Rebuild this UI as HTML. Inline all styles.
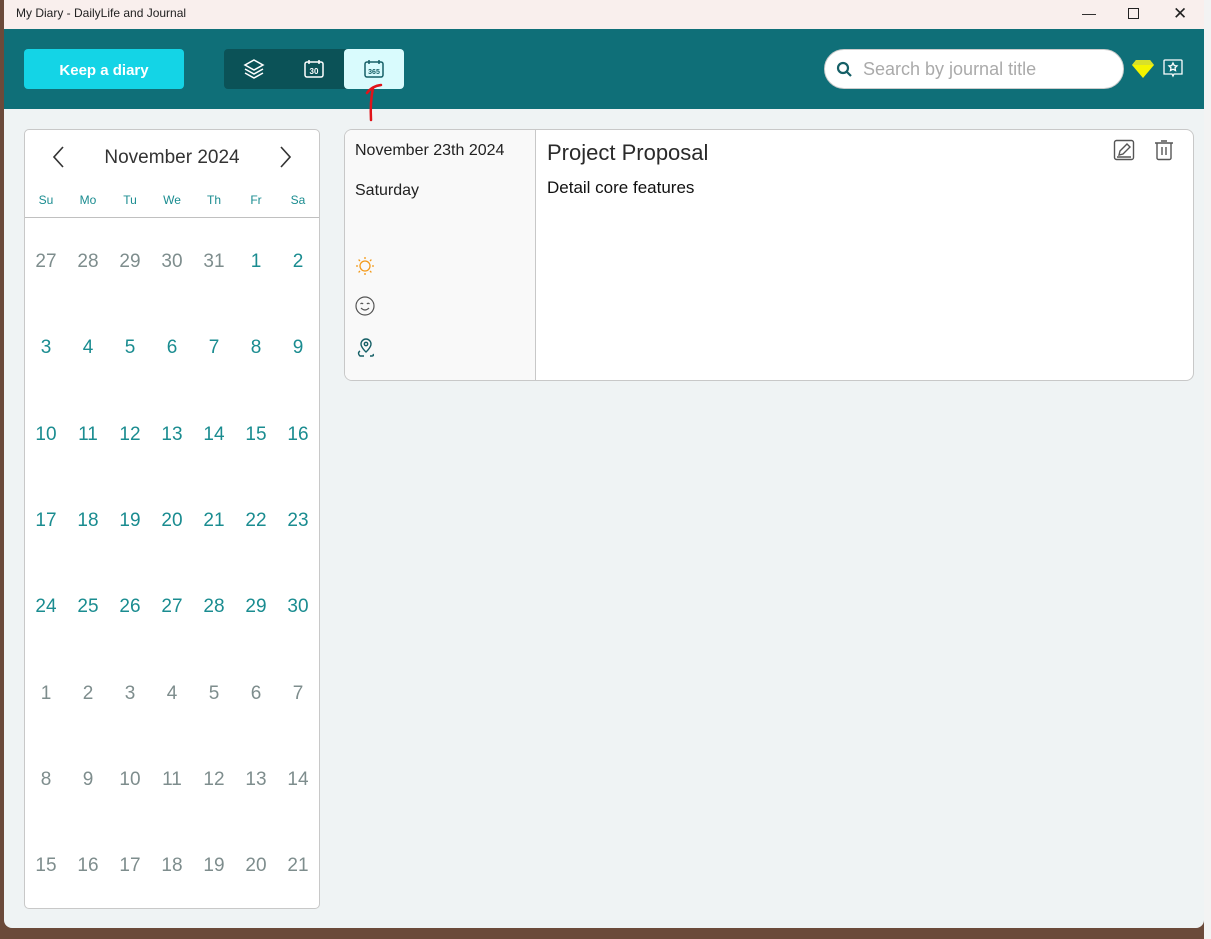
<!DOCTYPE html>
<html><head><meta charset="utf-8"><style>
*{margin:0;padding:0;box-sizing:border-box}
body{width:1211px;height:939px;overflow:hidden;background:#6b4a3a;font-family:"Liberation Sans",sans-serif;position:relative}
.rs{position:absolute;left:1204px;top:0;width:7px;height:939px;background:#f3f3f3}
.win{position:absolute;left:4px;top:0;width:1200px;height:928px;background:#eff3f4;border-radius:0 0 8px 8px;overflow:hidden}
.title{height:29px;background:#f9efed;font-size:12px;color:#222;line-height:27px;padding-left:12px;position:relative}
.ctl{position:absolute;top:0;font-size:14px;color:#222}
.hdr{position:absolute;top:29px;left:0;width:1200px;height:80px;background:#0f6f78}
.keep{position:absolute;left:20px;top:20px;width:160px;height:40px;background:#14d4e6;border-radius:4px;color:#fff;font-weight:bold;font-size:15px;text-align:center;line-height:43px}
.seg{position:absolute;left:220px;top:20px;width:180px;height:40px;background:#0b5257;border-radius:4px}
.seg .on{position:absolute;left:120px;top:0;width:60px;height:40px;background:#d9fbfd;border-radius:4px}
.search{position:absolute;left:820px;top:20px;width:300px;height:40px;background:#fff;border-radius:20px;border:1px solid #ccc;font-size:18px;color:#aaa;line-height:38px;padding-left:38px}
.cal{position:absolute;left:20px;top:129px;width:296px;height:780px;background:#fff;border:1px solid #c8c8c8;border-radius:5px}
.mon{position:absolute;top:17px;left:0;width:294px;text-align:center;font-size:19px;color:#333}
.wd,.d{position:absolute;width:42px;text-align:center;color:#1a8c90}
.wd{font-size:12px;top:63px}
.d{font-size:19px}
.g{color:#7e8d8d}
.line{position:absolute;left:0;top:87px;width:294px;height:1px;background:#c0c0c0}
.entry{position:absolute;left:340px;top:129px;width:850px;height:252px;background:#fff;border:1px solid #c8c8c8;border-radius:8px;overflow:hidden}
.left{position:absolute;left:0;top:0;width:191px;height:250px;background:#f9f9f9;border-right:1px solid #c8c8c8}
.t{position:absolute;color:#222}
</style></head><body>
<div class="rs"></div>
<div class="win">
<div class="title">My Diary - DailyLife and Journal
<span class="ctl" style="left:1078px">&#8212;</span>
<span class="ctl" style="left:1124px;top:8px;width:11px;height:11px;border:1.3px solid #222"></span>
<span class="ctl" style="left:1169px;font-size:17px">&#10005;</span>
</div>
<div class="hdr">
<div class="keep">Keep a diary</div>
<div class="seg">
<svg style="position:absolute;left:19px;top:9px" width="22" height="22" viewBox="0 0 22 22" fill="none" stroke="#fff" stroke-width="1.5"><path d="M11 2 L20 7 L11 12 L2 7Z"/><path d="M2 11 L11 16 L20 11"/><path d="M2 15 L11 20 L20 15"/></svg>
<svg style="position:absolute;left:79px;top:9px" width="22" height="22" viewBox="0 0 22 22" fill="none" stroke="#fff" stroke-width="1.5"><rect x="2" y="4" width="18" height="15" rx="2"/><path d="M6 2v4M16 2v4"/><text x="11" y="16" font-size="8" fill="#fff" stroke="none" text-anchor="middle" font-family="Liberation Sans" font-weight="bold">30</text></svg>
<div class="on"><svg style="position:absolute;left:19px;top:9px" width="22" height="22" viewBox="0 0 22 22" fill="none" stroke="#155f66" stroke-width="1.5"><rect x="2" y="4" width="18" height="15" rx="2"/><path d="M6 2v4M16 2v4"/><text x="11" y="16" font-size="7" fill="#155f66" stroke="none" text-anchor="middle" font-family="Liberation Sans" font-weight="bold">365</text></svg></div>
</div>
<div class="search"><svg style="position:absolute;left:11px;top:11px" width="17" height="17" viewBox="0 0 17 17" fill="none" stroke="#155f66" stroke-width="2.2"><circle cx="7" cy="7" r="5"/><path d="M11 11l4 4"/></svg>Search by journal title</div>
<svg style="position:absolute;left:1128px;top:30px" width="22" height="20" viewBox="0 0 22 20"><path d="M4 1h14l4 5-11 13L0 6z" fill="#f4f400"/><path d="M4 1h14l4 5H0z" fill="#d8e02a"/></svg>
<svg style="position:absolute;left:1158px;top:29px" width="22" height="22" viewBox="0 0 22 22" fill="none" stroke="#fff" stroke-width="1.3"><path d="M3 2h16a1 1 0 0 1 1 1v13h-8l-1 2-1-2H2V3a1 1 0 0 1 1-1z"/><path d="M11 5l1.3 2.6 2.7.3-2 1.9.5 2.7-2.5-1.3-2.5 1.3.5-2.7-2-1.9 2.7-.3z"/></svg>
</div>
<svg style="position:absolute;left:360px;top:82px" width="20" height="40" viewBox="0 0 20 40" fill="none" stroke="#e0141a" stroke-width="2.5" stroke-linecap="round"><path d="M7 38 Q6 20 9 6"/><path d="M3 11 Q8 4 17 3"/></svg>
<div class="cal">
<svg style="position:absolute;left:28px;top:16px" width="12" height="22" viewBox="0 0 12 22" fill="none" stroke="#333" stroke-width="1.6"><path d="M10 1L1 11l9 10"/></svg>
<div class="mon">November 2024</div>
<svg style="position:absolute;left:254px;top:16px" width="12" height="22" viewBox="0 0 12 22" fill="none" stroke="#333" stroke-width="1.6"><path d="M2 1l9 10-9 10"/></svg>
<div class="wd" style="left:0">Su</div><div class="wd" style="left:42px">Mo</div><div class="wd" style="left:84px">Tu</div><div class="wd" style="left:126px">We</div><div class="wd" style="left:168px">Th</div><div class="wd" style="left:210px">Fr</div><div class="wd" style="left:252px">Sa</div>
<div class="line"></div>
<div id="days"></div>
</div>
<div class="entry">
<div class="left">
<div class="t" style="left:10px;top:12px;font-size:16px">November 23th 2024</div>
<div class="t" style="left:10px;top:52px;font-size:16px">Saturday</div>
<svg style="position:absolute;left:10px;top:126px" width="20" height="20" viewBox="0 0 20 20" fill="none" stroke="#f39a1a" stroke-width="1.3"><circle cx="10" cy="10" r="5"/><path d="M10 1v2M10 17v2M1 10h2M17 10h2M3.6 3.6l1.4 1.4M15 15l1.4 1.4M3.6 16.4L5 15M15 5l1.4-1.4"/></svg>
<svg style="position:absolute;left:10px;top:166px" width="20" height="20" viewBox="0 0 20 20" fill="none" stroke="#555" stroke-width="1.2"><circle cx="10" cy="10" r="9"/><path d="M5.5 8q1.3-1.5 2.6 0M11.9 8q1.3-1.5 2.6 0M6 12q4 4 8 0"/></svg>
<svg style="position:absolute;left:10px;top:207px" width="22" height="22" viewBox="0 0 22 22" fill="none" stroke="#155f66" stroke-width="1.4"><path d="M11 15s-5-4.5-5-8a5 5 0 0 1 10 0c0 3.5-5 8-5 8z"/><circle cx="11" cy="7" r="1.7"/><path d="M5 14q-3 2 0 5h4M15 19h2q2 0 1-2"/></svg>
</div>
<div class="t" style="left:202px;top:10px;font-size:22px;color:#2a2a2a">Project Proposal</div>
<div class="t" style="left:202px;top:48px;font-size:17px;color:#111">Detail core features</div>
<svg style="position:absolute;left:768px;top:9px" width="22" height="22" viewBox="0 0 22 22" fill="none" stroke="#555" stroke-width="1.4"><rect x="1.5" y="1.5" width="19" height="19" rx="2"/><path d="M6 16l1-4 7-7 3 3-7 7z"/><path d="M4 18h14"/></svg>
<svg style="position:absolute;left:808px;top:9px" width="22" height="22" viewBox="0 0 22 22" fill="none" stroke="#555" stroke-width="1.4"><path d="M2 4h18M8 2h6M4 4v15a1.5 1.5 0 0 0 1.5 1.5h11A1.5 1.5 0 0 0 18 19V4M9 8v8M13 8v8"/></svg>
</div>
</div>
<script>
var rows=[[27,28,29,30,31,1,2],[3,4,5,6,7,8,9],[10,11,12,13,14,15,16],[17,18,19,20,21,22,23],[24,25,26,27,28,29,30],[1,2,3,4,5,6,7],[8,9,10,11,12,13,14],[15,16,17,18,19,20,21]];
var h='';
rows.forEach(function(r,i){r.forEach(function(n,j){var g=(i==0&&j<5)||i>4;h+='<div class="d'+(g?' g':'')+'" style="left:'+(j*42)+'px;top:'+(121+i*86.3)+'px">'+n+'</div>';});});
document.getElementById('days').innerHTML=h;
</script>
</body></html>
